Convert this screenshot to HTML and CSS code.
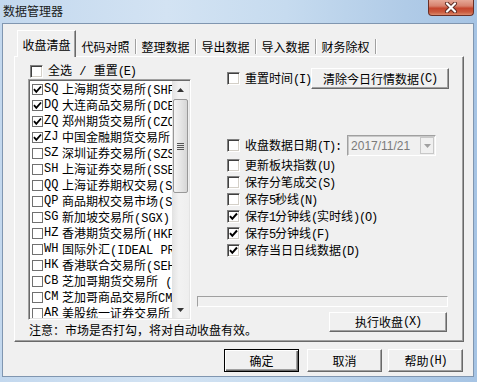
FILE: index.html
```html
<!DOCTYPE html>
<html>
<head>
<meta charset="utf-8">
<title>数据管理器</title>
<link rel="stylesheet" href="styles.css">
</head>
<body>
<div class="window">
  <div class="titlebar">
    <span class="title">数据管理器</span>
    <span class="close">
      <svg width="14" height="11" viewBox="0 0 14 11"><path d="M3 1.5 L11 9.5 M11 1.5 L3 9.5" stroke="#5b2a22" stroke-width="4" stroke-linecap="round"/><path d="M3 1.5 L11 9.5 M11 1.5 L3 9.5" stroke="#fff" stroke-width="2.2" stroke-linecap="round"/></svg>
    </span>
  </div>
  <div class="client">
    <div class="tabs">
      <div class="tab sel">收盘清盘</div>
      <div class="tab">代码对照</div>
      <div class="tab">整理数据</div>
      <div class="tab">导出数据</div>
      <div class="tab">导入数据</div>
      <div class="tab">财务除权</div>
    </div>
    <div class="panel">
      <div class="leftcol">
        <div class="allrow"><span class="cb"></span><span class="lbl">全选<span class="a sp"> / </span>重置<span class="a">(E)</span></span></div>
        <div class="listbox">
          <div class="items">
            <div class="item"><span class="lcb on"><svg width="9" height="9" viewBox="0 0 9 9"><path d="M1 4.2 L3.3 6.8 L8 1.5" stroke="#000" stroke-width="1.8" fill="none"/></svg></span><span class="code">SQ</span><span class="name">上海期货交易所(SHFE)</span></div>
            <div class="item"><span class="lcb on"><svg width="9" height="9" viewBox="0 0 9 9"><path d="M1 4.2 L3.3 6.8 L8 1.5" stroke="#000" stroke-width="1.8" fill="none"/></svg></span><span class="code">DQ</span><span class="name">大连商品交易所(DCE)</span></div>
            <div class="item"><span class="lcb on"><svg width="9" height="9" viewBox="0 0 9 9"><path d="M1 4.2 L3.3 6.8 L8 1.5" stroke="#000" stroke-width="1.8" fill="none"/></svg></span><span class="code">ZQ</span><span class="name">郑州期货交易所(CZCE)</span></div>
            <div class="item"><span class="lcb on"><svg width="9" height="9" viewBox="0 0 9 9"><path d="M1 4.2 L3.3 6.8 L8 1.5" stroke="#000" stroke-width="1.8" fill="none"/></svg></span><span class="code">ZJ</span><span class="name">中国金融期货交易所</span></div>
            <div class="item"><span class="lcb"></span><span class="code">SZ</span><span class="name">深圳证券交易所(SZSE)</span></div>
            <div class="item"><span class="lcb"></span><span class="code">SH</span><span class="name">上海证券交易所(SSE)</span></div>
            <div class="item"><span class="lcb"></span><span class="code">QQ</span><span class="name">上海证券期权交易(SSE)</span></div>
            <div class="item"><span class="lcb"></span><span class="code">QP</span><span class="name">商品期权交易市场(SHFE)</span></div>
            <div class="item"><span class="lcb"></span><span class="code">SG</span><span class="name">新加坡交易所(SGX)</span></div>
            <div class="item"><span class="lcb"></span><span class="code">HZ</span><span class="name">香港期货交易所(HKFE)</span></div>
            <div class="item"><span class="lcb"></span><span class="code">WH</span><span class="name">国际外汇(IDEAL PRO)</span></div>
            <div class="item"><span class="lcb"></span><span class="code">HK</span><span class="name">香港联合交易所(SEHK)</span></div>
            <div class="item"><span class="lcb"></span><span class="code">CB</span><span class="name">芝加哥期货交易所 (CBOT)</span></div>
            <div class="item"><span class="lcb"></span><span class="code">CM</span><span class="name">芝加哥商品交易所CME</span></div>
            <div class="item"><span class="lcb"></span><span class="code">AR</span><span class="name">美股统一证券交易所</span></div>
          </div>
          <div class="vscroll">
            <div class="sarrow"><svg width="7" height="4" viewBox="0 0 7 4"><path d="M0 4 L3.5 0 L7 4 Z" fill="#333"/></svg></div>
            <div class="strack">
              <div class="thumb"><span class="grip"></span></div>
            </div>
            <div class="sarrow"><svg width="7" height="4" viewBox="0 0 7 4"><path d="M0 0 L3.5 4 L7 0 Z" fill="#333"/></svg></div>
          </div>
        </div>
        <div class="note">注意：市场是否打勾，将对自动收盘有效。</div>
      </div>
      <div class="rightcol">
        <div class="row1">
          <span class="cb"></span><span class="lbl">重置时间<span class="a">(I)</span></span>
          <div class="btn clr">清除今日行情数据<span class="a">(C)</span></div>
        </div>
        <div class="daterow">
          <span class="cb"></span><span class="lbl">收盘数据日期<span class="a">(T):</span></span>
          <div class="combo"><span class="cval">2017/11/21</span><span class="cdrop"><svg width="7" height="4" viewBox="0 0 7 4"><path d="M0 0 L3.5 4 L7 0 Z" fill="#a0a0a0"/></svg></span></div>
        </div>
        <div class="opt first"><span class="cb"></span><span class="lbl">更新板块指数<span class="a">(U)</span></span></div>
        <div class="opt"><span class="cb"></span><span class="lbl">保存分笔成交<span class="a">(S)</span></span></div>
        <div class="opt"><span class="cb"></span><span class="lbl">保存<span class="a">5</span>秒线<span class="a">(N)</span></span></div>
        <div class="opt"><span class="cb on"><svg width="9" height="9" viewBox="0 0 9 9"><path d="M1 4.2 L3.3 6.8 L8 1.5" stroke="#000" stroke-width="2" fill="none"/></svg></span><span class="lbl">保存<span class="a">1</span>分钟线<span class="a">(</span>实时线<span class="a">)(O)</span></span></div>
        <div class="opt"><span class="cb on"><svg width="9" height="9" viewBox="0 0 9 9"><path d="M1 4.2 L3.3 6.8 L8 1.5" stroke="#000" stroke-width="2" fill="none"/></svg></span><span class="lbl">保存<span class="a">5</span>分钟线<span class="a">(F)</span></span></div>
        <div class="opt"><span class="cb on"><svg width="9" height="9" viewBox="0 0 9 9"><path d="M1 4.2 L3.3 6.8 L8 1.5" stroke="#000" stroke-width="2" fill="none"/></svg></span><span class="lbl">保存当日日线数据<span class="a">(D)</span></span></div>
        <div class="progress"></div>
        <div class="btn exec">执行收盘<span class="a">(X)</span></div>
      </div>
    </div>
    <div class="btnrow">
      <div class="btn dlg def">确定</div>
      <div class="btn dlg cancel">取消</div>
      <div class="btn dlg">帮助<span class="a">(H)</span></div>
    </div>
  </div>
</div>
</body>
</html>
```

FILE: styles.css
```css
* { box-sizing: border-box; margin: 0; padding: 0; }
html, body { width: 477px; height: 382px; overflow: hidden; }
body {
  font-family: "Noto Sans CJK SC", sans-serif;
  font-size: 12px;
  color: #000;
  background: #fff;
}
.window {
  width: 477px;
  height: 382px;
  display: flex;
  flex-direction: column;
  background: linear-gradient(90deg, #c3d8ee 0%, #d3e3f3 35%, #c6dbef 60%, #b0cbe7 85%, #a6c4e4 100%);
}
.titlebar {
  height: 23px;
  display: flex;
  align-items: flex-start;
}
.title {
  margin: 3px 0 0 3px;
  line-height: 15px;
  font-size: 12px;
  color: #1b1b1b;
}
.close {
  margin-left: auto;
  margin-right: 3px;
  width: 46px;
  height: 16px;
  border: 1px solid #6a2f26;
  border-top: none;
  border-radius: 0 0 4px 4px;
  background: linear-gradient(180deg, #e6a897 0%, #d7826e 40%, #c5462e 55%, #c95a3e 80%, #dc8a6c 100%);
  display: flex;
  align-items: center;
  justify-content: center;
}
.client {
  margin: 0 3px 5px 2px;
  height: 354px;
  border: 1px solid #8096b0;
  background: #f0f0f0;
  display: flex;
  flex-direction: column;
}
.a {
  font-family: "Liberation Mono", monospace;
  letter-spacing: -1.2px;
}
.a.sp { white-space: pre; letter-spacing: 0; }
/* tabs */
.tabs {
  display: flex;
  align-items: flex-end;
  height: 26px;
  margin: 6px 0 0 14px;
}
.tab {
  width: 60px;
  height: 15px;
  line-height: 15px;
  margin-bottom: 2px;
  text-align: center;
  border-right: 1px solid #a0a0a0;
  box-shadow: 1px 0 0 #fff;
  white-space: nowrap;
}
.tab.sel {
  width: 59px;
  height: 27px;
  line-height: 16px;
  padding-top: 6px;
  margin-bottom: -1px;
  border-top: 1px solid #fff;
  border-left: 1px solid #fff;
  border-right: 1px solid #696969;
  box-shadow: inset -1px 0 0 #a0a0a0;
  background: #f0f0f0;
  position: relative;
  z-index: 1;
}
.panel {
  margin-left: 11px;
  width: 450px;
  height: 286px;
  border-top: 1px solid #fff;
  border-left: 1px solid #fff;
  border-right: 1px solid #696969;
  border-bottom: 1px solid #696969;
  box-shadow: inset -1px -1px 0 #a0a0a0;
  display: flex;
}
/* checkboxes */
.cb {
  flex: none;
  width: 13px;
  height: 13px;
  border-top: 1px solid #808080;
  border-left: 1px solid #808080;
  border-right: 1px solid #fff;
  border-bottom: 1px solid #fff;
  box-shadow: inset 1px 1px 0 #404040, inset -1px -1px 0 #d4d0c8;
  background: #fff;
  display: flex;
  align-items: center;
  justify-content: center;
}
.lbl { white-space: nowrap; line-height: 16px; }
/* left column */
.leftcol {
  margin-left: 13px;
  width: 163px;
  display: flex;
  flex-direction: column;
}
.allrow {
  margin-top: 6px;
  height: 16px;
  padding-left: 2px;
  display: flex;
  align-items: center;
}
.allrow .lbl { margin-left: 5px; }
.listbox {
  height: 241px;
  display: flex;
  border-top: 1px solid #a0a0a0;
  border-left: 1px solid #a0a0a0;
  border-right: 1px solid #fff;
  border-bottom: 1px solid #fff;
  box-shadow: inset 1px 1px 0 #696969, inset -1px -1px 0 #e3e3e3;
  padding: 1px;
  background: #fff;
}
.items {
  flex: 1;
  overflow: hidden;
  font-family: "Liberation Mono", "Noto Sans CJK SC", monospace;
}
.item {
  height: 16px;
  display: flex;
  align-items: center;
  white-space: nowrap;
  padding-left: 2px;
}
.lcb {
  flex: none;
  width: 11px;
  height: 11px;
  border: 1px solid #707070;
  background: #fff;
  display: flex;
  align-items: center;
  justify-content: center;
}
.code { flex: none; width: 18px; margin-left: 1px; }
.name { flex: none; }
.vscroll {
  width: 17px;
  display: flex;
  flex-direction: column;
  background: linear-gradient(90deg, #e2e2e2, #f2f2f2 40%, #eeeeee);
}
.sarrow {
  height: 17px;
  display: flex;
  align-items: center;
  justify-content: center;
}
.strack { flex: 1; padding: 1px 1px 0 1px; }
.thumb {
  height: 94px;
  border: 1px solid #989898;
  border-radius: 2px;
  background: linear-gradient(90deg, #f4f4f4, #e6e6e6 50%, #d6d6d6);
  display: flex;
  align-items: center;
  justify-content: center;
}
.grip {
  width: 7px;
  height: 7px;
  background: repeating-linear-gradient(180deg, #555 0 1px, transparent 1px 2px);
}
.note {
  margin-top: 2px;
  margin-left: 1px;
  height: 16px;
  line-height: 16px;
  white-space: nowrap;
}
/* right column */
.rightcol {
  margin-left: 6px;
  width: 252px;
  display: flex;
  flex-direction: column;
}
.row1, .daterow {
  height: 21px;
  display: flex;
  align-items: center;
}
.row1 { margin-top: 11px; }
.daterow { margin-top: 46px; }
.row1 .cb, .daterow .cb, .opt .cb { margin-left: 30px; }
.row1 .lbl, .daterow .lbl, .opt .lbl { margin-left: 5px; }
.opt {
  height: 17px;
  display: flex;
  align-items: center;
}
.opt.first { margin-top: 1px; }
.btn {
  background: #f0f0f0;
  border-top: 1px solid #fff;
  border-left: 1px solid #fff;
  border-right: 1px solid #696969;
  border-bottom: 1px solid #696969;
  box-shadow: inset -1px -1px 0 #a0a0a0;
  display: flex;
  align-items: center;
  justify-content: center;
  white-space: nowrap;
  line-height: 16px;
}
.clr { margin-left: auto; width: 138px; height: 21px; }
.combo {
  margin-left: 6px;
  width: 89px;
  height: 21px;
  border: 1px solid #a0a0a0;
  border-right-color: #fff;
  border-bottom-color: #fff;
  box-shadow: inset 1px 1px 0 #c8c8c8;
  background: #f0f0f0;
  display: flex;
  align-items: center;
  padding: 0 1px 0 3px;
}
.cval {
  flex: 1;
  font-family: "Liberation Sans", sans-serif;
  font-size: 12px;
  color: #7a7a7a;
}
.cdrop {
  width: 14px;
  height: 17px;
  border: 1px solid #c8c8c8;
  background: #f0f0f0;
  display: flex;
  align-items: center;
  justify-content: center;
}
.progress {
  margin-top: 37px;
  width: 251px;
  height: 11px;
  border-top: 1px solid #a0a0a0;
  border-left: 1px solid #a0a0a0;
  border-right: 1px solid #fff;
  border-bottom: 1px solid #fff;
  background: #f0f0f0;
}
.exec {
  margin-top: 5px;
  margin-left: 132px;
  width: 118px;
  height: 20px;
}
/* dialog buttons */
.btnrow {
  margin-top: 7px;
  padding-right: 10px;
  display: flex;
  justify-content: flex-end;
}
.dlg { width: 75px; height: 23px; }
.def {
  margin-right: 8px;
  border: 1px solid #000;
  box-shadow: inset 1px 1px 0 #fff, inset -1px -1px 0 #696969, inset -2px -2px 0 #a0a0a0;
}
.cancel { margin-right: 6px; }
```
